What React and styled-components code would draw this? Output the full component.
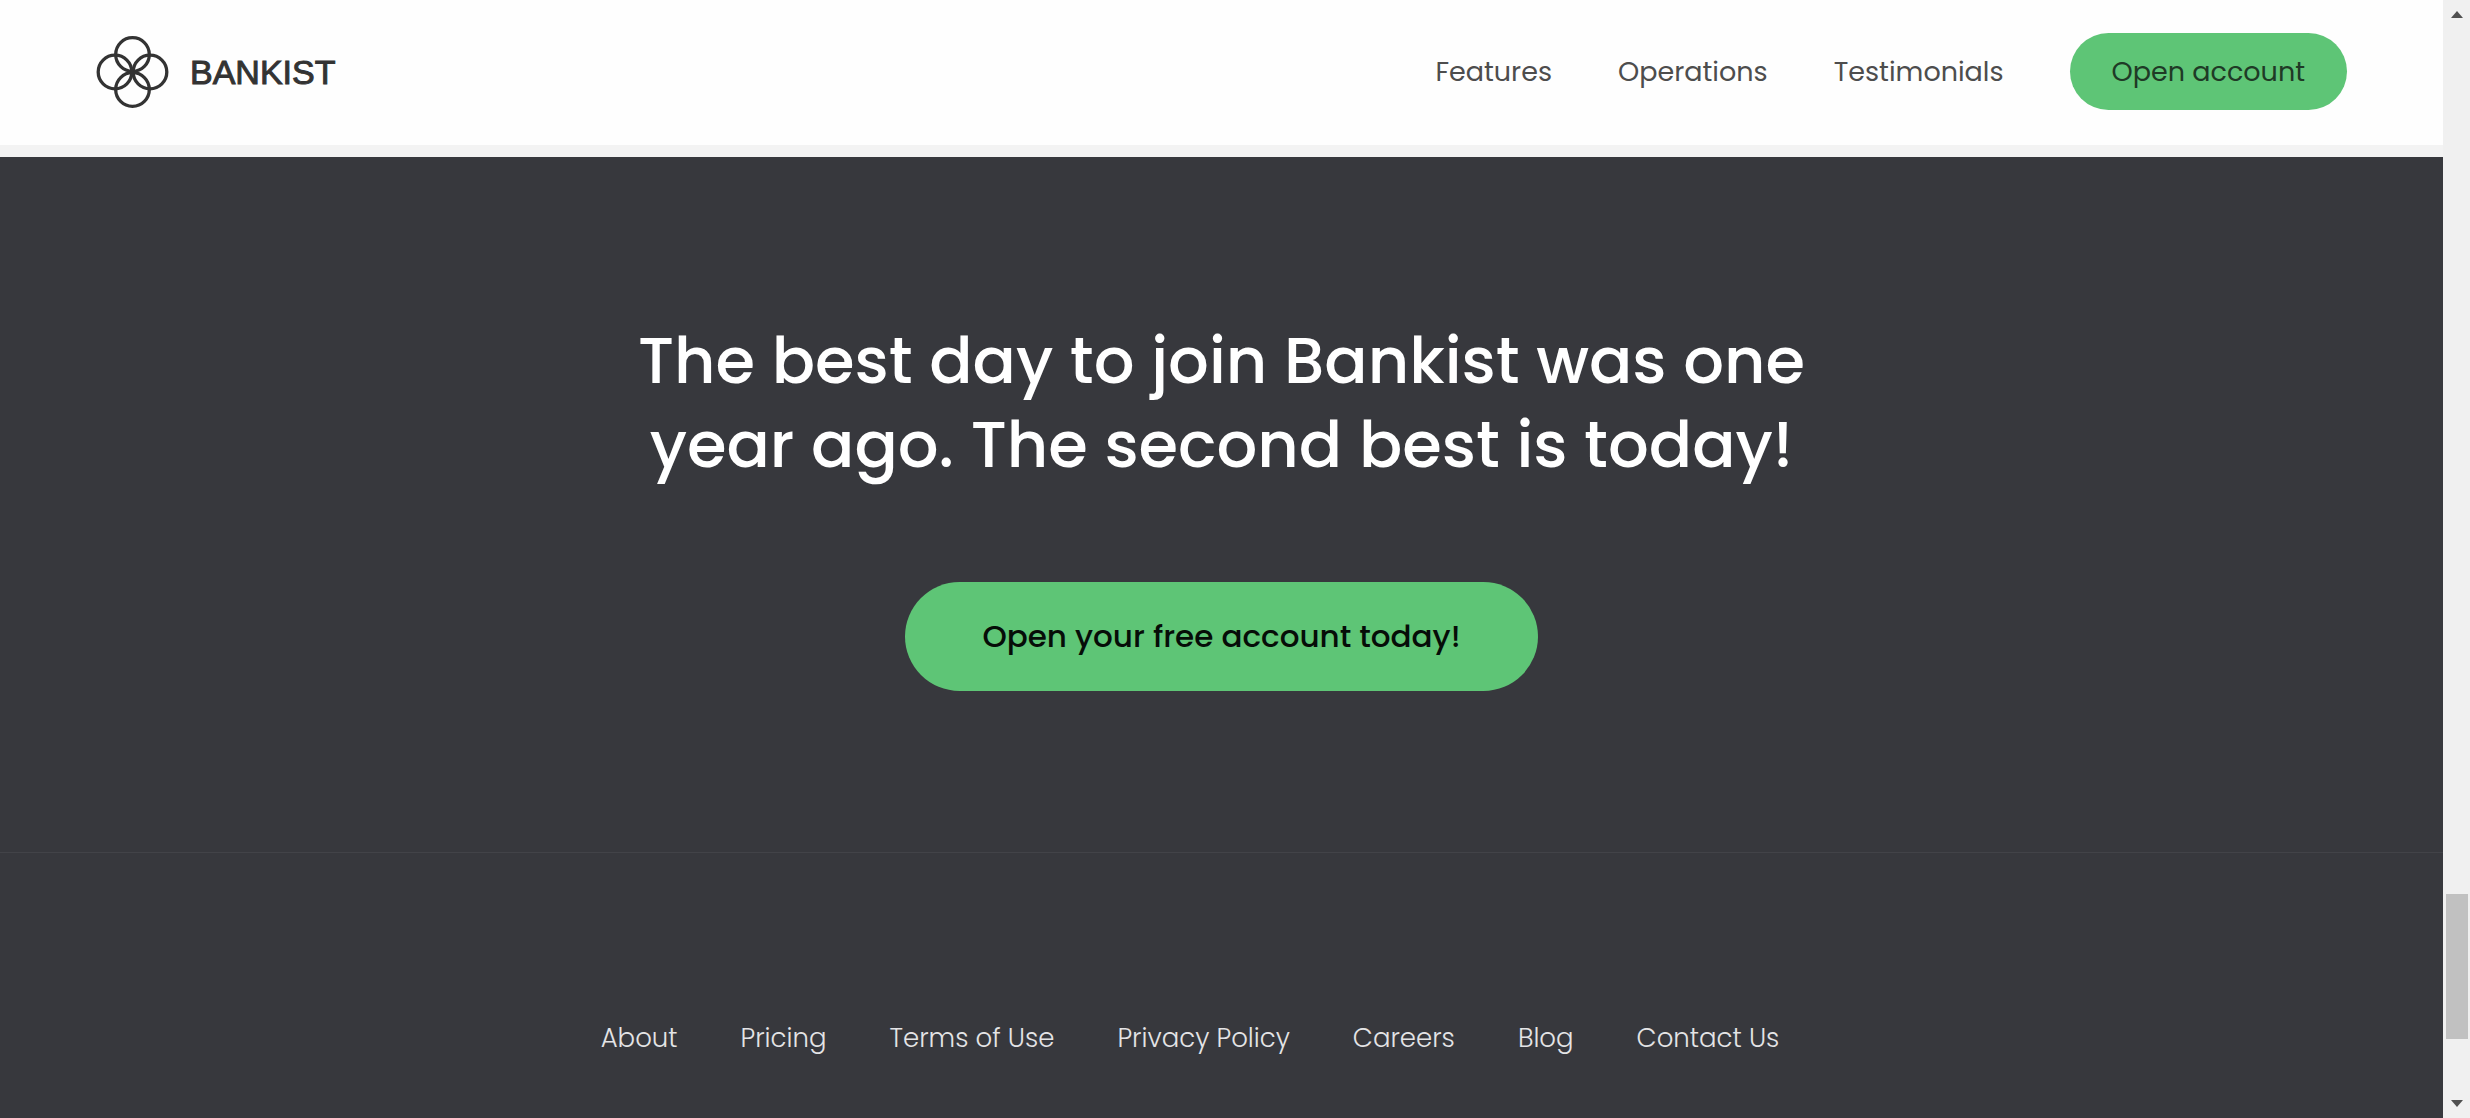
import React from "react";
import styled, { createGlobalStyle } from "styled-components";

const GlobalStyle = createGlobalStyle`
  *, *::before, *::after { box-sizing: border-box; }
  body {
    margin: 0;
    background: #f3f3f3;
    font-family: Poppins, Inter, "Open Sans", sans-serif;
  }
  ul { margin: 0; padding: 0; list-style: none; }
`;

const Shell = styled.div`
  display: grid;
  grid-template-columns: minmax(0, 1fr) 27px;
  height: 100vh;
  overflow: hidden;
`;

const Page = styled.div`
  display: flex;
  flex-direction: column;
  min-width: 0;
  gap: 12px;
`;

const Header = styled.header`
  display: flex;
  align-items: center;
  justify-content: space-between;
  padding: 33px 96px 35px;
  background: #fefefe;
`;

const Brand = styled.a`
  display: flex;
  align-items: center;
  gap: 20px;
  color: #333;
  font: 400 34px/40px "Liberation Sans", Arial, sans-serif;
  -webkit-text-stroke: 1px #333;
  text-decoration: none;
`;

const NavList = styled.ul`
  display: flex;
  align-items: center;
  gap: 66px;
`;

const NavLink = styled.a`
  color: #4d4d4d;
  font-size: 27px;
  line-height: 40px;
  text-decoration: none;
`;

const Button = styled.button`
  border: 0;
  border-radius: 160px;
  background: #5ec576;
  color: ${(p) => (p.$large ? "#060d08" : "#1f3a26")};
  font-family: inherit;
  font-size: ${(p) => (p.$large ? 31 : 27)}px;
  font-weight: ${(p) => (p.$large ? 500 : 400)};
  line-height: ${(p) => (p.$large ? 45 : 41)}px;
  padding: ${(p) => (p.$large ? "32px 77px" : "18px 42px")};
  cursor: pointer;
`;

const Dark = styled.div`
  flex: 1;
  background: #37383d;
`;

const SignUp = styled.section`
  display: flex;
  flex-direction: column;
  align-items: center;
  gap: 95px;
  padding: 162px 32px 161px;
  border-bottom: 1px solid #424348;
`;

const Title = styled.h2`
  margin: 0;
  max-width: 1280px;
  color: #fff;
  font-size: 64px;
  font-weight: 500;
  line-height: 84px;
  text-align: center;
`;

const FooterBar = styled.footer`
  padding: 165px 64px 58px;
`;

const FooterList = styled.ul`
  display: flex;
  flex-wrap: wrap;
  justify-content: center;
`;

const FooterItem = styled.li`
  margin-right: 63px;
`;

const FooterLink = styled.a`
  color: #e4e4e6;
  font-size: 26px;
  font-weight: 300;
  line-height: 40px;
  text-decoration: none;
`;

const ScrollRail = styled.div`
  display: flex;
  flex-direction: column;
  align-items: center;
  padding: 11px 0;
  background: #f0f0f0;
`;

const Arrow = styled.svg`
  flex: none;
  width: 12px;
  height: 7px;
  fill: #505050;
`;

const ScrollTrack = styled.div`
  flex: 1;
  display: grid;
  grid-template-rows: 876fr 145fr 61fr;
  width: 22px;
`;

const Thumb = styled.div`
  grid-row: 2;
  background: #c1c1c1;
`;

const navItems = ["Features", "Operations", "Testimonials"];
const footerItems = [
  "About",
  "Pricing",
  "Terms of Use",
  "Privacy Policy",
  "Careers",
  "Blog",
  "Contact Us",
];

function Logo() {
  return (
    <svg width="74" height="74" viewBox="0 0 74 74" fill="none" stroke="#333" strokeWidth="3.3" aria-hidden="true">
      <circle cx="36.5" cy="19.5" r="16.8" />
      <circle cx="54" cy="37" r="16.8" />
      <circle cx="36.5" cy="54.5" r="16.8" />
      <circle cx="19" cy="37" r="16.8" />
    </svg>
  );
}

export default function App() {
  return (
    <>
      <GlobalStyle />
      <Shell>
        <Page>
          <Header>
            <Brand href="#top">
              <Logo />
              BANKIST
            </Brand>
            <nav>
              <NavList>
                {navItems.map((item) => (
                  <li key={item}>
                    <NavLink href={`#${item.toLowerCase()}`}>{item}</NavLink>
                  </li>
                ))}
                <li>
                  <Button type="button">Open account</Button>
                </li>
              </NavList>
            </nav>
          </Header>
          <Dark>
            <SignUp>
              <Title>
                The best day to join Bankist was one
                <br />
                year ago. The second best is today!
              </Title>
              <Button type="button" $large>
                Open your free account today!
              </Button>
            </SignUp>
            <FooterBar>
              <FooterList>
                {footerItems.map((item) => (
                  <FooterItem key={item}>
                    <FooterLink href="#footer">{item}</FooterLink>
                  </FooterItem>
                ))}
              </FooterList>
            </FooterBar>
          </Dark>
        </Page>
        <ScrollRail aria-hidden="true">
          <Arrow viewBox="0 0 12 7">
            <path d="M6 0l6 7H0z" />
          </Arrow>
          <ScrollTrack>
            <Thumb />
          </ScrollTrack>
          <Arrow viewBox="0 0 12 7">
            <path d="M6 7L0 0h12z" />
          </Arrow>
        </ScrollRail>
      </Shell>
    </>
  );
}
